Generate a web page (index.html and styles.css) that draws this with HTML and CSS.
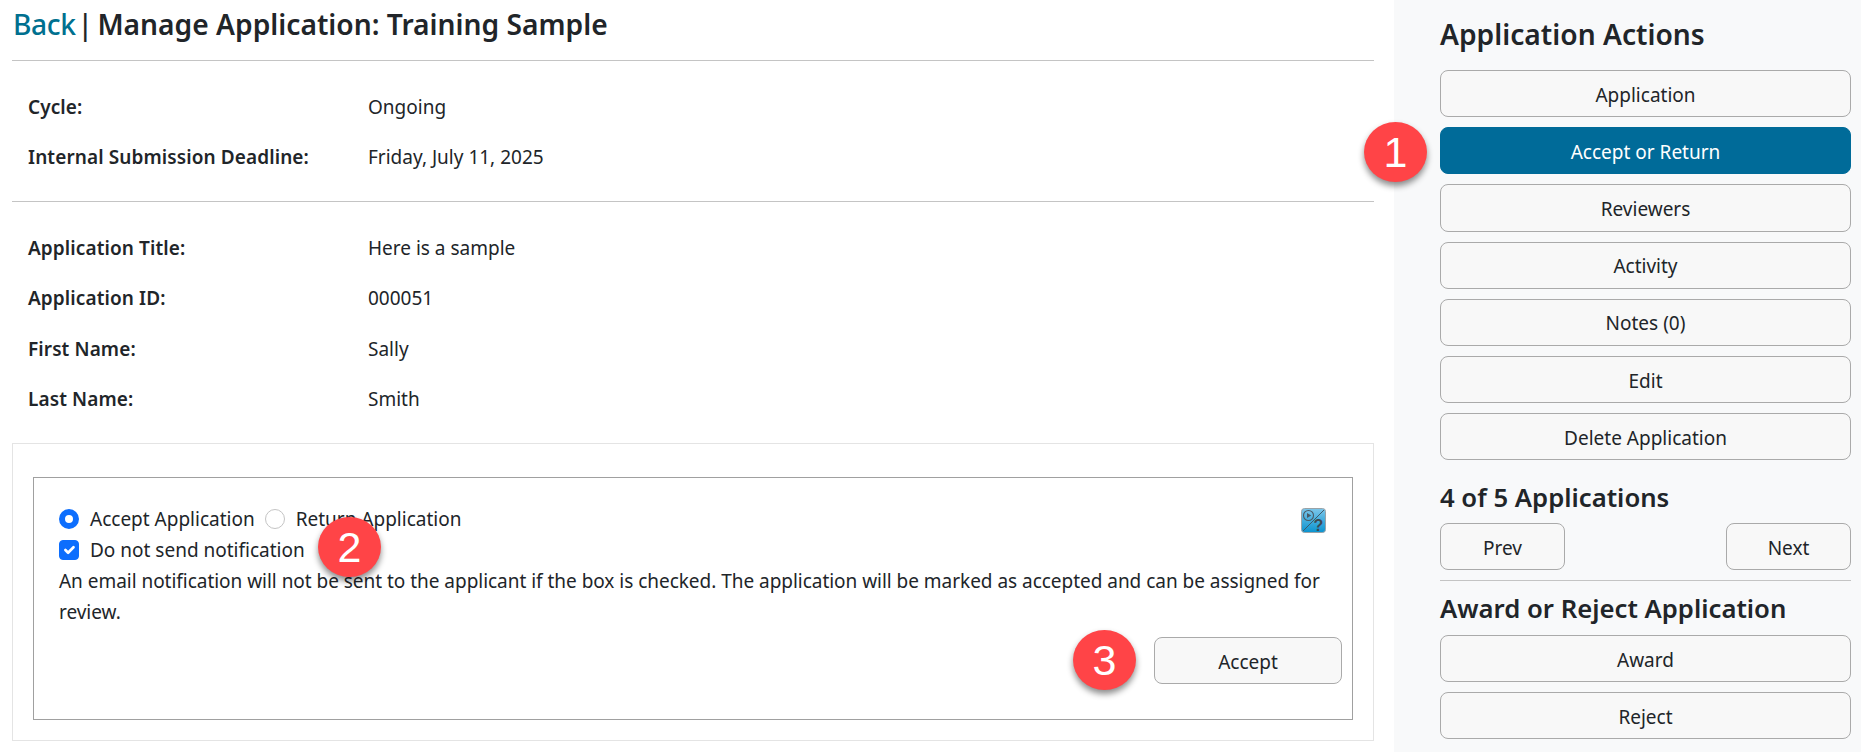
FILE: index.html
```html
<!DOCTYPE html>
<html lang="en">
<head>
<meta charset="utf-8">
<title>Manage Application</title>
<link rel="stylesheet" href="styles.css">
</head>
<body>
<div class="page">
  <main class="main">
    <h1 class="title"><a class="back" href="#">Back</a><span class="sep">|</span> Manage Application: Training Sample</h1>
    <hr class="rule">
    <dl class="rows rows-cycle">
      <div class="row"><dt>Cycle:</dt><dd>Ongoing</dd></div>
      <div class="row"><dt>Internal Submission Deadline:</dt><dd>Friday, July 11, 2025</dd></div>
    </dl>
    <hr class="rule">
    <dl class="rows rows-app">
      <div class="row"><dt>Application Title:</dt><dd>Here is a sample</dd></div>
      <div class="row"><dt>Application ID:</dt><dd>000051</dd></div>
      <div class="row"><dt>First Name:</dt><dd>Sally</dd></div>
      <div class="row"><dt>Last Name:</dt><dd>Smith</dd></div>
    </dl>
    <section class="card">
      <div class="panel">
        <div class="line line-radios">
          <label class="opt"><input class="radio" type="radio" name="act" checked><span>Accept Application</span></label>
          <label class="opt"><input class="radio" type="radio" name="act"><span>Return Application</span></label>
          <svg class="help" viewBox="0 0 25 25" aria-label="Help">
            <defs><linearGradient id="hg" x1="0" y1="0" x2="0" y2="1"><stop offset="0" stop-color="#7cc6ea"/><stop offset="1" stop-color="#0a93cf"/></linearGradient></defs>
            <rect x=".5" y=".5" width="24" height="24" rx="3" fill="url(#hg)" stroke="#9aa3a8"/>
            <path d="M23 2 2 23" stroke="#3f5a6a" stroke-width="1" fill="none"/>
            <circle cx="7.500" cy="7.500" r="5" fill="none" stroke="#4a5a66" stroke-width="1.100"/>
            <path d="M6 5l4.200 2.500L6 10z" fill="#4a5a66"/>
            <text x="17.500" y="22.500" class="help-q">?</text>
          </svg>
        </div>
        <div class="line">
          <label class="opt"><input class="check" type="checkbox" checked><span>Do not send notification</span></label>
        </div>
        <p class="note">An email notification will not be sent to the applicant if the box is checked. The application will be marked as accepted and can be assigned for review.</p>
        <div class="panel-foot">
          <button class="btn btn-accept" type="button">Accept</button>
        </div>
      </div>
    </section>
  </main>
  <aside class="side">
    <h2 class="side-h side-h-first">Application Actions</h2>
    <div class="stack">
      <button class="btn" type="button">Application</button>
      <button class="btn btn-active" type="button">Accept or Return</button>
      <button class="btn" type="button">Reviewers</button>
      <button class="btn" type="button">Activity</button>
      <button class="btn" type="button">Notes (0)</button>
      <button class="btn" type="button">Edit</button>
      <button class="btn" type="button">Delete Application</button>
    </div>
    <h2 class="side-h side-h-count">4 of 5 Applications</h2>
    <div class="pager">
      <button class="btn btn-pager" type="button">Prev</button>
      <button class="btn btn-pager" type="button">Next</button>
    </div>
    <hr class="rule rule-side">
    <h2 class="side-h side-h-award">Award or Reject Application</h2>
    <div class="stack">
      <button class="btn" type="button">Award</button>
      <button class="btn" type="button">Reject</button>
    </div>
  </aside>
  <div class="badge badge-1">1</div>
  <div class="badge badge-2">2</div>
  <div class="badge badge-3">3</div>
</div>
</body>
</html>
```

FILE: styles.css
```css
* { box-sizing: border-box; }
html, body { margin: 0; padding: 0; background: #fff; }
body {
  font-family: "Noto Sans", "Open Sans", sans-serif;
  font-size: 19px;
  color: #212529;
}
.page { position: relative; display: flex; width: 1861px; height: 752px; overflow: hidden; }
.main { width: 1394px; flex: none; padding: 0 20px 0 12px; }
.side { flex: 1; background: #f8f9fa; padding: 0 10px 0 46px; }

.title { margin: 0; padding: 5px 0 0 1px; height: 60px; font-size: 28.200px; line-height: 38px; font-weight: 600; }
.back { color: #00708f; text-decoration: none; font-weight: 500; letter-spacing: -.4px; }
.sep { margin-left: 2px; margin-right: -3px; font-weight: 500; }
.rule { margin: 0; border: 0; height: 1px; background: #c4c4c4; }

.rows { margin: 0; padding-left: 16px; }
.rows-cycle { padding-top: 21px; padding-bottom: 18.500px; }
.rows-app { padding-top: 21px; padding-bottom: 19px; }
.row { display: grid; grid-template-columns: 340px 1fr; height: 50.250px; align-items: center; }
.row dt { font-weight: 600; letter-spacing: .1px; }
.row dd { margin: 0; }

.card { border: 1px solid #e4e4e4; height: 298px; padding: 33px 20px 0 20px; }
.panel { border: 1px solid #a0a0a0; height: 243px; padding: 25px 10px 0 25px; }
.line { display: flex; align-items: center; height: 31px; }
.line-radios { padding-right: 16px; }
.opt { display: flex; align-items: center; gap: 11px; margin-right: 10px; }
.radio, .check { appearance: none; margin: 0; width: 20px; height: 20px; flex: none; background: #fff; }
.radio { border: 1px solid #c4c4c4; border-radius: 50%; }
.radio:checked { border: 6px solid #0d6efd; }
.check { border-radius: 4px; border: 1px solid #c4c4c4; }
.check:checked {
  border-color: #0d6efd;
  background: #0d6efd url("data:image/svg+xml,%3Csvg xmlns='http://www.w3.org/2000/svg' viewBox='0 0 20 20'%3E%3Cpath fill='none' stroke='%23fff' stroke-linecap='round' stroke-linejoin='round' stroke-width='3' d='m6 10 3 3 6-6'/%3E%3C/svg%3E") center/100% no-repeat;
}
.help { width: 25px; height: 25px; margin-left: auto; margin-top: 3px; }
.help-q { font: 700 16px "Liberation Sans", sans-serif; fill: #3d4a55; text-anchor: middle; }
.note { margin: 1px 0 0; line-height: 31px; letter-spacing: -.03px; }
.panel-foot { display: flex; justify-content: flex-end; padding-top: 9px; }

.btn {
  display: block; width: 100%; height: 47.200px; padding: 2px 0 0;
  font: inherit; color: #212529;
  background: #f8f8f8; border: 1px solid #aaa; border-radius: 8px;
}
.btn-active { background: #006b99; border-color: #006b99; color: #fff; }
.btn-accept { width: 188px; }
.btn-pager { width: 125px; }

.stack { display: flex; flex-direction: column; gap: 10px; }
.side-h { margin: 0; font-size: 25.700px; font-weight: 600; line-height: 34px; }
.side-h-first { font-size: 28.200px; padding-top: 17px; height: 70px; }
.side-h-count { padding-top: 21px; height: 62.600px; }
.side-h-award { padding-top: 11px; height: 54px; }
.pager { display: flex; justify-content: space-between; }
.rule-side { margin-top: 10px; }

.badge {
  position: absolute; width: 63px; height: 60px; border-radius: 50%;
  background: #ff4447; color: #fff;
  font: 43px/60px "Liberation Sans", sans-serif; text-align: center;
  box-shadow: 0 4px 6px rgba(0, 0, 0, .45);
}
.badge-1 { left: 1364px; top: 122px; }
.badge-2 { left: 318px; top: 517px; }
.badge-3 { left: 1073px; top: 630px; }
```
